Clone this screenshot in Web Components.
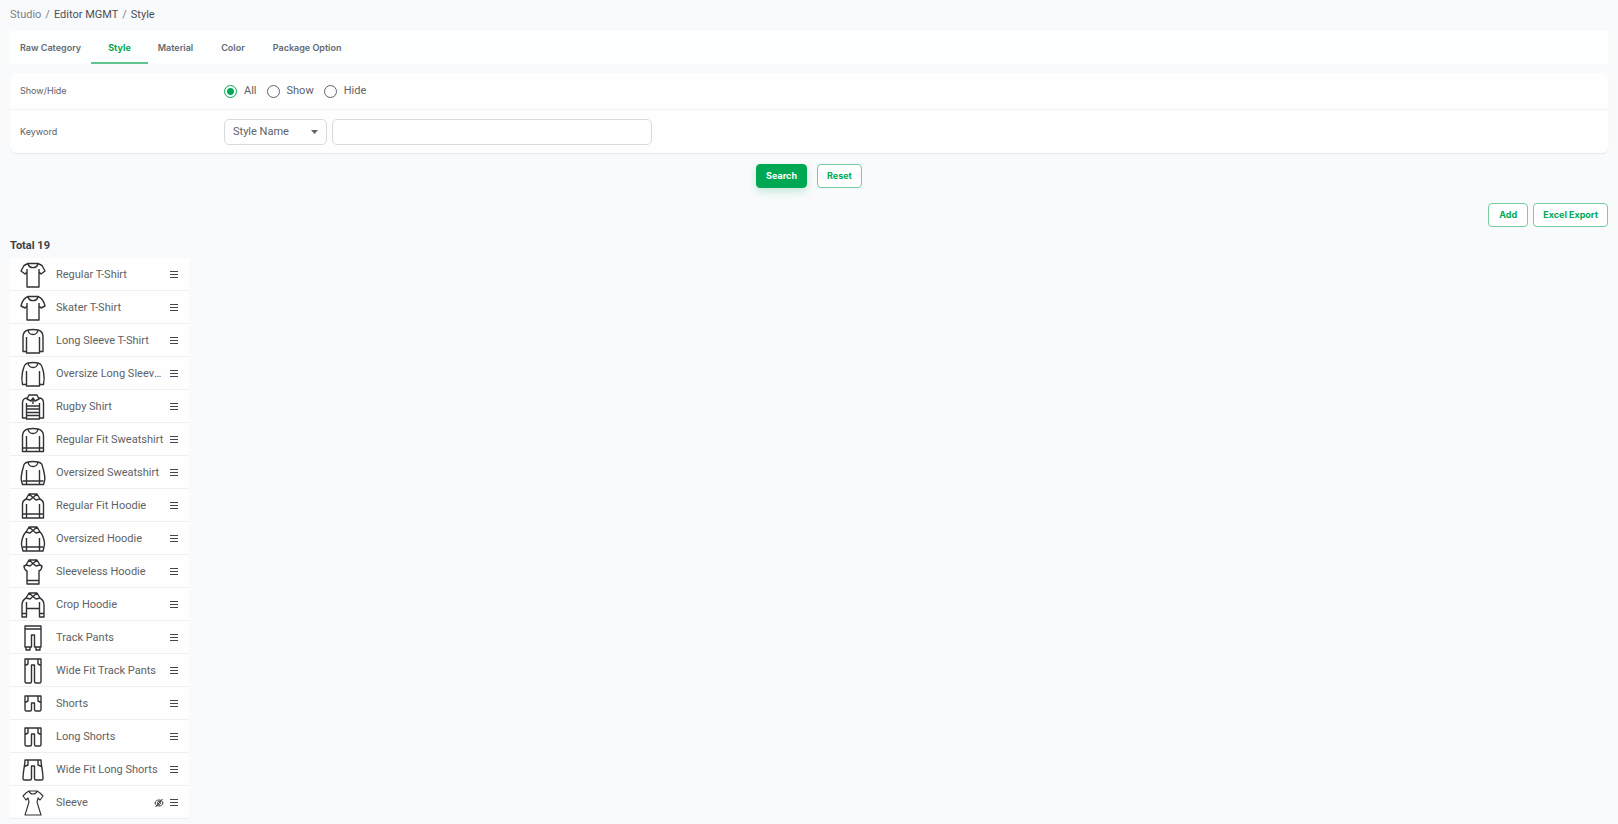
<!DOCTYPE html>
<html lang="en">
<head>
<meta charset="UTF-8">
<meta name="viewport" content="width=device-width, initial-scale=1">
<title>Style</title>
<style>
    html {
        height: 100%;
        overflow: hidden;
    }
    body {
        margin: 0;
        background: #f9fafc;
        color: #5f6266;
        font: 11px/16px Roboto, "Liberation Sans", sans-serif;
    }
</style>
</head>
<body>
<style-page></style-page>

<script>
const tabs = ['Raw Category', 'Style', 'Material', 'Color', 'Package Option'];

// garment drawings, 26 x 26
const tee = '<path d="M8 1.500 4 3.500 1 9l4 3 2-2v15h12V10l2 2 4-3-3-5.500-4-2ZM8 1.500c1 5.500 9 5.500 10 0M7 7v3m12-3v3"/>';
const skater = '<path d="M8 1.500C4 3 2 6 1 11l4 2 2-2v14h12V11l2 2 4-2c-1-5-3-8-7-9.500ZM8 1.500c1 5.500 9 5.500 10 0M7 8v3m12-3v3"/>';
const collar = '<path d="M8 2q5-1 10 0M8 2c1 6 9 6 10 0"/>';
const hood = '<path d="M6 6 9 1h8l3 5-4 1-3-2.500L10 7ZM9 1l4 3.500L17 1"/>';
const cuffs = '<path d="M2.500 21h4m13 0h4M6.500 21h13"/>';

const icons = {
    tee,
    skater,
    long: collar + '<path d="M8 2C4 3 3 5 3 9v14.500h3.500V9M18 2c4 1 5 3 5 7v14.500h-3.500V9M6.500 23v2h13v-2"/>',
    oversizeLong: collar + '<path d="M8 2C4 3 4 6 2.500 11c-1 5-1 8 0 12.500h4V10M18 2c4 1 4 4 5.500 9 1 5 1 8 0 12.500h-4V10M6.500 23v2h13v-2"/>',
    rugby: '<path d="M7 4C4 4 2.500 6 2.500 9v15h4V9M19 4c3 0 4.500 2 4.500 5v15h-4V9M6.500 24v1h13v-1M9 1h8l2 4-4 2-2-3-2 3-4-2ZM13 4v6M6.500 12h13M6.500 15h13M6.500 18.500h13M6.500 21.500h13"/>',
    sweat: collar + '<path d="M8 2C4 3 2.500 5 2.500 9v15.500h4V9M18 2c4 1 5.500 3 5.500 7v15.500h-4V9M6.500 24.500h13"/>' + cuffs,
    oversizeSweat: collar + '<path d="M8 2C3 3 4 6 2.500 10c-1 5-2 8-1 11l1 3.500h4V10M18 2c5 1 4 4 5.500 8 1 5 2 8 1 11l-1 3.500h-4V10M6.500 24.500h13"/>' + cuffs,
    hoodie: hood + '<path d="M6.500 6c-3 1-4 3-4 5v14h4V11m13-5c3 1 4 3 4 5v14h-4V11M6.500 25h13"/>' + cuffs,
    oversizeHoodie: hood + '<path d="M6.500 6C4 7 3 10 2 14c-1 4-1 5 0 7l1 4h3.500V12m13-6C22 7 23 10 24 14c1 4 1 5 0 7l-1 4h-3.500V12M6.500 25h13"/>' + cuffs,
    sleeveless: hood + '<path d="M6.500 6 4 7c0 3 1 4 3 5v13h12V12c2-1 3-2 3-5l-2.500-1M7 21.500h12"/>',
    crop: hood + '<path d="M6.500 6C4 7 2 9 2 13v12h4.500V10m13-4C22 7 24 9 24 13v12h-4.500V10M6.500 16.500h13M2 21.500h4.500m13 0H24"/>',
    track: '<path d="M5 1h16v21h-1v3h-4v-3h-1.500V10h-3v12H10v3H6v-3H5ZM5 4h16M6 22h4m6 0h4"/>',
    wideTrack: '<path d="M5 1h16v22.500q0 1.500-1.500 1.500h-3.500q-1.500 0-1.500-1.500V7h-3v16.500q0 1.500-1.500 1.500H6.500Q5 25 5 23.500ZM8 1v5L5 7.500M18 1v5l3 1.500"/>',
    shorts: '<path d="M5 5h16v13.500q0 1.500-1.500 1.500h-3.500q-1.500 0-1.500-1.500V12h-3v6.500q0 1.500-1.500 1.500H6.500Q5 20 5 18.500ZM8 5v5l-3 1.500M18 5v5l3 1.500"/>',
    longShorts: '<path d="M5 4h16v16.500q0 1.500-1.500 1.500h-3.500q-1.500 0-1.500-1.500V10h-3v10.500q0 1.500-1.500 1.500H6.500Q5 22 5 20.500ZM8 4v5l-3 1.500M18 4v5l3 1.500"/>',
    wideShorts: '<path d="M5 3h16c0 6 2 10 2 18.500q0 1.500-1.500 1.500h-5.500q-1.500 0-1.500-1.500V9h-3v12.500q0 1.500-1.500 1.500H4.500Q3 23 3 21.500C3 13 5 9 5 3ZM8 3v5l-3.500 1.500M18 3v5l3.500 1.500"/>',
    dress: '<path d="M9 1 6 3 3 6l3 4 2-2 1 4-4 13h16l-4-13 1-4 2 2 3-4-3-3-3-2ZM9 1c1 4 7 4 8 0" stroke-width="1.1"/>'
};

const styles = [
    { name: 'Regular T-Shirt', icon: 'tee' },
    { name: 'Skater T-Shirt', icon: 'skater' },
    { name: 'Long Sleeve T-Shirt', icon: 'long' },
    { name: 'Oversize Long Sleeve T-Shirt', icon: 'oversizeLong' },
    { name: 'Rugby Shirt', icon: 'rugby' },
    { name: 'Regular Fit Sweatshirt', icon: 'sweat' },
    { name: 'Oversized Sweatshirt', icon: 'oversizeSweat' },
    { name: 'Regular Fit Hoodie', icon: 'hoodie' },
    { name: 'Oversized Hoodie', icon: 'oversizeHoodie' },
    { name: 'Sleeveless Hoodie', icon: 'sleeveless' },
    { name: 'Crop Hoodie', icon: 'crop' },
    { name: 'Track Pants', icon: 'track' },
    { name: 'Wide Fit Track Pants', icon: 'wideTrack' },
    { name: 'Shorts', icon: 'shorts' },
    { name: 'Long Shorts', icon: 'longShorts' },
    { name: 'Wide Fit Long Shorts', icon: 'wideShorts' },
    { name: 'Sleeve', icon: 'dress', hidden: true }
];

class BaseElement extends HTMLElement {
    constructor() {
        super();
        this.attachShadow({ mode: 'open' });
    }

    connectedCallback() {
        this.shadowRoot.innerHTML = this.render();
    }
}

class PageBreadcrumb extends BaseElement {
    render() {
        return `
            <style>
                :host { display: block; }
                nav { display: flex; gap: 4px; color: #7b8087; }
                a { color: inherit; text-decoration: none; }
                a:nth-of-type(2), b { color: #4b4f54; font-weight: 400; }
            </style>
            <nav aria-label="Breadcrumb">
                <a href="#studio">Studio</a><span>/</span>
                <a href="#editor">Editor MGMT</a><span>/</span>
                <b>Style</b>
            </nav>
        `;
    }
}

class TabBar extends BaseElement {
    render() {
        return `
            <style>
                :host { display: block; background: #fdfefe; }
                nav { display: flex; }
                button {
                    height: 33px;
                    padding: 2px 10px 0;
                    margin-right: 8px;
                    border: 0;
                    border-bottom: 2px solid transparent;
                    background: none;
                    color: #636a73;
                    font: 600 9px/16px Inter, "Liberation Sans", sans-serif;
                    cursor: pointer;
                }
                button:first-child { margin-right: 0; }
                button.active {
                    padding: 2px 17px 0;
                    margin-right: 0;
                    border-color: #5fc590;
                    color: #00a854;
                    font-weight: 700;
                }
            </style>
            <nav>${tabs.map(tab => `<button type="button"${tab === 'Style' ? ' class="active"' : ''}>${tab}</button>`).join('')}</nav>
        `;
    }
}

class SearchPanel extends BaseElement {
    render() {
        return `
            <style>
                :host {
                    display: block;
                    border-radius: 6px;
                    background: #fefefe;
                    box-shadow: 0 1px 1px #e7eaec;
                }
                .row {
                    display: grid;
                    grid-template-columns: 204px 1fr;
                    align-items: center;
                    min-height: 36px;
                    padding: 0 10px;
                }
                .row + .row { min-height: 43px; border-top: 1px solid #f0f2f3; }
                .title { font-family: Inter, "Liberation Sans", sans-serif; font-size: 9px; }
                .radios { display: flex; gap: 10px; }
                .radios label { display: flex; align-items: center; gap: 7px; }
                input[type=radio] {
                    appearance: none;
                    box-sizing: border-box;
                    width: 13px;
                    height: 13px;
                    margin: 0;
                    border: 1px solid #5f646b;
                    border-radius: 50%;
                }
                input[type=radio]:checked {
                    border-color: #00a854;
                    background: radial-gradient(circle, #00a854 3px, transparent 4px);
                }
                .fields { display: flex; gap: 5px; }
                .select { display: grid; align-items: center; }
                .select > * { grid-area: 1 / 1; }
                .select svg { justify-self: end; margin-right: 9px; pointer-events: none; }
                select, input[type=text] {
                    appearance: none;
                    box-sizing: border-box;
                    height: 26px;
                    padding: 0 8px;
                    border: 1px solid #d9dcdf;
                    border-radius: 5px;
                    background: none;
                    color: inherit;
                    font: inherit;
                }
                select { width: 103px; }
                input[type=text] { width: 320px; }
            </style>
            <div class="row">
                <span class="title" id="visibility">Show/Hide</span>
                <div class="radios" role="radiogroup" aria-labelledby="visibility">
                    <label><input type="radio" name="show" checked>All</label>
                    <label><input type="radio" name="show">Show</label>
                    <label><input type="radio" name="show">Hide</label>
                </div>
            </div>
            <div class="row">
                <label class="title" id="keyword-label" for="keyword">Keyword</label>
                <div class="fields">
                    <div class="select">
                        <select aria-labelledby="keyword-label"><option>Style Name</option></select>
                        <svg width="7" height="4" viewBox="0 0 7 4"><path d="M0 0h7L3.500 4Z" fill="#5f6368"/></svg>
                    </div>
                    <input type="text" id="keyword">
                </div>
            </div>
        `;
    }
}

class AppButton extends BaseElement {
    render() {
        return `
            <style>
                :host { display: block; }
                button {
                    box-sizing: border-box;
                    height: 24px;
                    min-width: 40px;
                    padding: 0 9px;
                    border: 1px solid #75cda0;
                    border-radius: 4px;
                    background: #fff;
                    color: #00a854;
                    font: 700 9px/16px Inter, "Liberation Sans", sans-serif;
                    cursor: pointer;
                }
                :host([primary]) button {
                    border-color: #00a854;
                    background: #00a854;
                    color: #fff;
                    box-shadow: 0 4px 8px #00a85433;
                }
            </style>
            <button type="button"><slot></slot></button>
        `;
    }
}

class StyleItem extends BaseElement {
    render() {
        const eye = `
            <svg class="eye" width="10" height="10" viewBox="0 0 10 10" role="img" aria-label="Hidden">
                <path d="M1 5c1-4 7-4 8 0-1 4-7 4-8 0ZM1.500 9 8.500 1M3.500 5c0-2 3-2 3 0s-3 2-3 0"/>
            </svg>`;
        return `
            <style>
                :host {
                    display: flex;
                    align-items: center;
                    box-sizing: border-box;
                    height: 33px;
                    padding: 1px 10px 0;
                    border-bottom: 1px solid #edeff1;
                    background: #fefefe;
                }
                svg { flex: none; fill: none; stroke: #303236; stroke-width: 1.4; stroke-linejoin: round; }
                .name {
                    flex: 1;
                    min-width: 0;
                    margin-left: 10px;
                    overflow: hidden;
                    white-space: nowrap;
                    text-overflow: ellipsis;
                }
                .eye { stroke-width: 1; }
                button { display: flex; margin-left: 6px; padding: 0; border: 0; background: none; cursor: grab; }
                button svg { stroke: #44474b; stroke-width: 1; }
            </style>
            <svg width="26" height="26" viewBox="0 0 26 26">${icons[this.getAttribute('icon')] || ''}</svg>
            <span class="name"><slot></slot></span>
            ${this.hasAttribute('concealed') ? eye : ''}
            <button type="button" aria-label="Move">
                <svg width="9" height="9" viewBox="0 0 9 9"><path d="M0 1.500h8M0 4.500h8M0 7.500h8"/></svg>
            </button>
        `;
    }
}

class StylePage extends BaseElement {
    render() {
        return `
            <style>
                :host { display: block; padding: 7px 10px 0; }
                tab-bar { margin: 8px 0 9px; }
                .actions, .tools { display: flex; }
                .actions { justify-content: center; gap: 10px; margin: 11px 0 15px; }
                .tools { justify-content: flex-end; gap: 5px; }
                h2 {
                    margin: 11px 0 4px;
                    color: #3c4045;
                    font-size: 11px;
                    line-height: 16px;
                    font-weight: 700;
                }
                .list { width: 179px; }
            </style>
            <page-breadcrumb></page-breadcrumb>
            <tab-bar></tab-bar>
            <search-panel></search-panel>
            <div class="actions">
                <app-button primary>Search</app-button>
                <app-button>Reset</app-button>
            </div>
            <div class="tools">
                <app-button>Add</app-button>
                <app-button>Excel Export</app-button>
            </div>
            <h2>Total 19</h2>
            <div class="list">
                ${styles.map(s => `<style-item icon="${s.icon}"${s.hidden ? ' concealed' : ''}>${s.name}</style-item>`).join('')}
            </div>
        `;
    }
}

customElements.define('page-breadcrumb', PageBreadcrumb);
customElements.define('tab-bar', TabBar);
customElements.define('search-panel', SearchPanel);
customElements.define('app-button', AppButton);
customElements.define('style-item', StyleItem);
customElements.define('style-page', StylePage);
</script>
</body>
</html>
